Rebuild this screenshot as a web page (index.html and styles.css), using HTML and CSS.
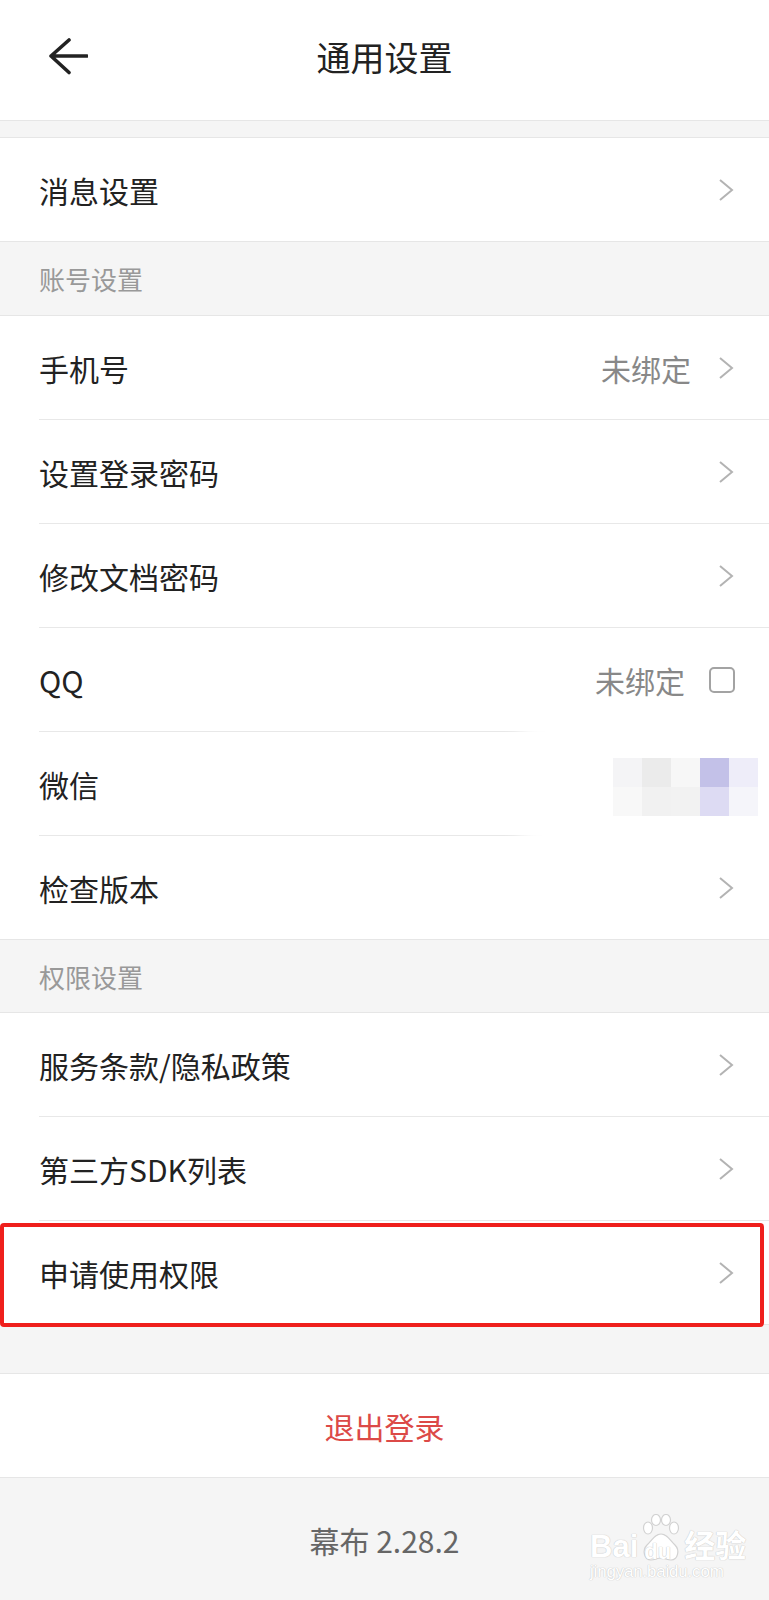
FILE: index.html
```html
<!DOCTYPE html>
<html lang="zh-CN">
<head>
    <meta charset="UTF-8">
    <meta name="viewport" content="width=device-width, initial-scale=1.0">
    <title>通用设置</title>
    <link rel="stylesheet" href="styles.css">
</head>
<body>
    <header class="topbar">
        <div class="back">
            <svg width="40" height="40" viewBox="0 0 40 40"><path d="M39 20H3M21 4L3 20l18 16.5" fill="none" stroke="#222" stroke-width="3.6" stroke-linecap="round" stroke-linejoin="round"/></svg>
        </div>
        <h1 class="title">通用设置</h1>
        <div></div>
    </header>

    <div class="band"></div>

    <div class="list">
        <div class="row"><div class="row-body"><span class="name">消息设置</span><span class="chev"><svg width="16" height="24" viewBox="0 0 16 24"><path d="M2 2l12 10L2 22" fill="none" stroke="#b3b3b3" stroke-width="2"/></svg></span></div></div>
    </div>

    <div class="label">账号设置</div>

    <div class="list">
        <div class="row"><div class="row-body"><span class="name">手机号</span><span class="value">未绑定</span><span class="chev"><svg width="16" height="24" viewBox="0 0 16 24"><path d="M2 2l12 10L2 22" fill="none" stroke="#b3b3b3" stroke-width="2"/></svg></span></div></div>
        <div class="row"><div class="row-body"><span class="name">设置登录密码</span><span class="chev"><svg width="16" height="24" viewBox="0 0 16 24"><path d="M2 2l12 10L2 22" fill="none" stroke="#b3b3b3" stroke-width="2"/></svg></span></div></div>
        <div class="row"><div class="row-body"><span class="name">修改文档密码</span><span class="chev"><svg width="16" height="24" viewBox="0 0 16 24"><path d="M2 2l12 10L2 22" fill="none" stroke="#b3b3b3" stroke-width="2"/></svg></span></div></div>
        <div class="row"><div class="row-body"><span class="name">QQ</span><span class="value value-qq">未绑定</span><span class="check"></span></div></div>
        <div class="row row-wx">
            <div class="row-body"><span class="name">微信</span></div>
            <div class="mosaic">
                <div class="mosaic-grid">
                    <i style="background:#f4f4f6"></i><i style="background:#ebebeb"></i><i style="background:#f7f7f7"></i><i style="background:#c3c1e8"></i><i style="background:#eeedf9"></i>
                    <i style="background:#f8f8f8"></i><i style="background:#f1f1f1"></i><i style="background:#f2f2f2"></i><i style="background:#dddbf3"></i><i style="background:#f5f5fa"></i>
                </div>
            </div>
        </div>
        <div class="row"><div class="row-body"><span class="name">检查版本</span><span class="chev"><svg width="16" height="24" viewBox="0 0 16 24"><path d="M2 2l12 10L2 22" fill="none" stroke="#b3b3b3" stroke-width="2"/></svg></span></div></div>
    </div>

    <div class="label label-2">权限设置</div>

    <div class="list">
        <div class="row"><div class="row-body"><span class="name">服务条款/隐私政策</span><span class="chev"><svg width="16" height="24" viewBox="0 0 16 24"><path d="M2 2l12 10L2 22" fill="none" stroke="#b3b3b3" stroke-width="2"/></svg></span></div></div>
        <div class="row"><div class="row-body"><span class="name">第三方SDK列表</span><span class="chev"><svg width="16" height="24" viewBox="0 0 16 24"><path d="M2 2l12 10L2 22" fill="none" stroke="#b3b3b3" stroke-width="2"/></svg></span></div></div>
        <div class="row row-marked">
            <div class="row-body"><span class="name">申请使用权限</span><span class="chev"><svg width="16" height="24" viewBox="0 0 16 24"><path d="M2 2l12 10L2 22" fill="none" stroke="#b3b3b3" stroke-width="2"/></svg></span></div>
            <div class="marker"></div>
        </div>
    </div>

    <div class="spacer"></div>

    <div class="logout">退出登录</div>

    <footer class="footer">
        <span class="version">幕布 2.28.2</span>
        <div class="watermark">
            <div class="wm-line">
                <span>Bai</span>
                <span class="paw">
                    <svg width="44" height="48" viewBox="0 0 44 48"><g fill="#fff" stroke="#d2d2d2" stroke-width="1.2"><ellipse cx="9" cy="14" rx="4.5" ry="6"/><ellipse cx="17" cy="6" rx="4.5" ry="5.5"/><ellipse cx="27" cy="6" rx="4.5" ry="5.5"/><ellipse cx="35" cy="14" rx="4.5" ry="6"/><path d="M22 20c-6 0-9 6-14 11-5 5-3 15 4 15 4 0 6-2 10-2s6 2 10 2c7 0 9-10 4-15-5-5-8-11-14-11z"/></g></svg>
                    <span class="paw-text">du</span>
                </span>
                <span>经验</span>
            </div>
            <div class="wm-url">jingyan.baidu.com</div>
        </div>
    </footer>
</body>
</html>
```

FILE: styles.css
```css
body { margin: 0; background: #f5f5f5; font-family: "Noto Sans CJK SC", "Noto Sans", sans-serif; color: #222; }

.topbar { display: grid; grid-template-columns: 1fr auto 1fr; align-items: center; height: 121px; padding-bottom: 8px; box-sizing: border-box; background: #fff; border-bottom: 1px solid #e6e6e6; }
.back { display: flex; padding-left: 48px; }
.title { margin: 0; font-size: 34px; font-weight: 400; color: #222; }

.band { height: 16px; }

.list { background: #fff; border-top: 1px solid #e6e6e6; border-bottom: 1px solid #e6e6e6; }
.row { position: relative; padding-left: 39px; }
.row-body { display: flex; align-items: center; height: 103px; padding-right: 35px; border-bottom: 1px solid #e8e8e8; }
.row:last-child .row-body { height: 103px; border-bottom: none; }
.name { flex: 1; font-size: 30px; color: #222; }
.value { font-size: 30px; color: #888; margin-right: 27px; }
.value-qq { margin-right: 24px; }
.chev { display: flex; }
.check { width: 22px; height: 22px; border: 2px solid #a3a3a3; border-radius: 5px; margin-right: -1px; }

.label { height: 73px; padding-left: 39px; display: flex; align-items: center; font-size: 26px; color: #999; }
.label-2 { height: 72px; }

/* blurred account avatar over the WeChat row */
.mosaic { position: absolute; top: -4px; bottom: -4px; left: 545px; right: 0; background: #fff; box-shadow: -12px 0 18px 12px #fff; }
.mosaic-grid { display: grid; grid-template-columns: repeat(5, 29px); grid-template-rows: repeat(2, 29px); margin: 30px 0 0 68px; }

.marker { position: absolute; top: 2px; bottom: -3px; left: 0; right: 5px; border: 4px solid #ef1f1c; border-radius: 4px; }

.spacer { height: 48px; }

.logout { height: 103px; display: flex; align-items: center; justify-content: center; background: #fff; border-top: 1px solid #e6e6e6; border-bottom: 1px solid #e6e6e6; font-size: 30px; color: #dc4a47; }

.footer { position: relative; height: 122px; display: flex; justify-content: center; padding-top: 40px; box-sizing: border-box; }
.version { font-size: 30px; color: #666; line-height: 44px; }

.watermark { position: absolute; left: 590px; top: 36px; color: #fff; text-shadow: 0 0 1px #c8c8c8, 0 0 1px #c8c8c8; font-family: "Liberation Sans", "Noto Sans CJK SC", sans-serif; }
.wm-line { display: flex; align-items: flex-end; font-size: 31px; font-weight: 700; line-height: 30px; }
.paw { position: relative; width: 44px; height: 48px; margin: 0 1px; }
.paw svg { position: absolute; left: 0; top: 0; }
.paw-text { position: absolute; left: 5px; bottom: -1px; font-size: 22px; line-height: 22px; color: #fff; }
.wm-url { font-size: 17px; line-height: 20px; letter-spacing: -0.2px; }
```
